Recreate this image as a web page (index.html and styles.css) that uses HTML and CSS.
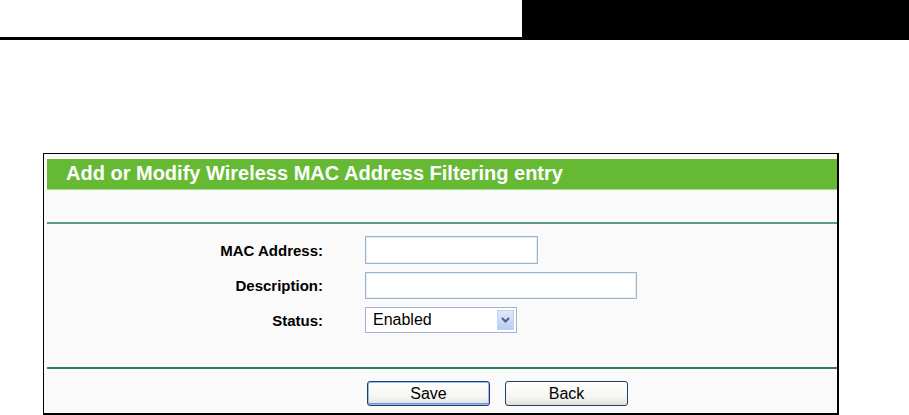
FILE: index.html
```html
<!DOCTYPE html>
<html lang="en">
<head>
    <meta charset="UTF-8">
    <title>Wireless MAC Address Filtering</title>
    <link rel="stylesheet" href="styles.css">
</head>
<body>
    <div class="page-head">
        <div class="head-left"></div>
        <div class="head-right"></div>
    </div>

    <div class="panel">
        <div class="panel-title">Add or Modify Wireless MAC Address Filtering entry</div>
        <div class="panel-gap"></div>

        <div class="form-grid">
            <label class="field-label" for="mac">MAC Address:</label>
            <input type="text" id="mac" class="field-input mac-input">

            <label class="field-label" for="desc">Description:</label>
            <input type="text" id="desc" class="field-input desc-input">

            <label class="field-label" for="status">Status:</label>
            <div class="select-box" id="status">
                <span class="select-value">Enabled</span>
                <span class="select-arrow">
                    <svg width="9" height="6" viewBox="0 0 9 6"><path d="M1 1 L4.5 4.5 L8 1" fill="none" stroke="#4d6185" stroke-width="2"/></svg>
                </span>
            </div>
        </div>

        <div class="button-row">
            <button class="btn btn-default">Save</button>
            <button class="btn">Back</button>
        </div>
    </div>
</body>
</html>
```

FILE: styles.css
```css
body {
    margin: 0;
    background: #fff;
    font-family: 'Liberation Sans', Arial, sans-serif;
    color: #000;
}
.page-head {
    display: flex;
    height: 40px;
}
.head-left {
    width: 522px;
    height: 37px;
    border-bottom: 3px solid #000;
}
.head-right {
    flex: 1;
    background: #000;
}
.panel {
    margin: 113px 0 0 43px;
    width: 796px;
    border: 1px solid #000;
    border-width: 1px 2px 2px 1px;
    background: #fafafa;
    padding: 5px 0 0 3px;
    box-sizing: border-box;
    height: 262px;
}
.panel-title {
    background: #66b933;
    color: #fff;
    font-weight: bold;
    font-size: 20px;
    height: 30px;
    line-height: 29px;
    padding-left: 19px;
    border-bottom: 1px solid #a9d98c;
}
.panel-gap {
    height: 32px;
    border-bottom: 2px solid #5d9b7c;
}
.form-grid {
    display: grid;
    grid-template-columns: 276px auto;
    column-gap: 42px;
    row-gap: 8px;
    align-items: center;
    padding: 12px 0 34px;
    border-bottom: 2px solid #2f7e55;
}
.field-label {
    text-align: right;
    font-weight: bold;
    font-size: 15px;
}
.field-input {
    height: 28px;
    box-sizing: border-box;
    border: 1px solid #9fb4cc;
    box-shadow: inset 0 0 0 1px #e3ebf4;
    background: #fff;
    margin: 0;
}
.mac-input {
    width: 173px;
}
.desc-input {
    width: 272px;
    height: 27px;
}
.select-box {
    width: 152px;
    height: 26px;
    box-sizing: border-box;
    border: 1px solid #9fb4cc;
    background: #fff;
    display: flex;
    align-items: center;
    justify-content: space-between;
    padding: 2px;
}
.select-value {
    font-size: 16px;
    padding-left: 5px;
}
.select-arrow {
    width: 17px;
    height: 20px;
    background: linear-gradient(#dfe8fb, #b9cdf5);
    border: 1px solid #c4d3f2;
    box-sizing: border-box;
    display: flex;
    align-items: center;
    justify-content: center;
}
.button-row {
    display: flex;
    gap: 15px;
    padding: 12px 0 0 320px;
}
.btn {
    width: 123px;
    height: 25px;
    border: 1px solid #1f3f6f;
    border-radius: 3px;
    background: linear-gradient(#ffffff, #f4f4f0 70%, #e0dfd8);
    font-family: 'Liberation Sans', Arial, sans-serif;
    font-size: 16px;
    color: #000;
    padding: 0;
}
.btn-default {
    box-shadow: inset 0 0 0 1px #9cb9ec, inset 0 -1px 0 1px #6b95dd;
}
```
